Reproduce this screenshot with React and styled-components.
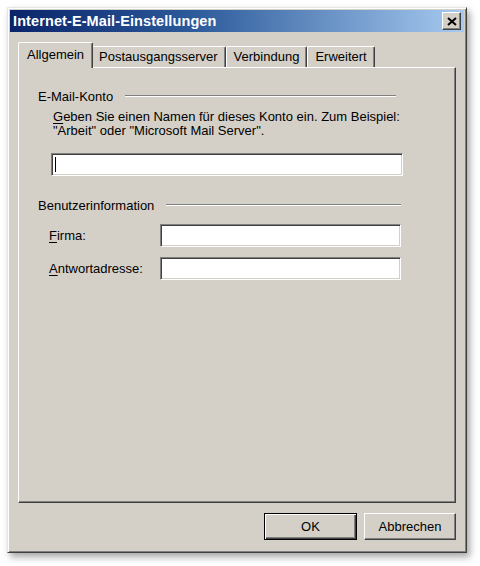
import { useState } from "react";
import styled, { createGlobalStyle } from "styled-components";

const GlobalStyle = createGlobalStyle`
  html, body {
    margin: 0;
    padding: 0;
    background: #ffffff;
  }
  body {
    font-family: Tahoma, "Liberation Sans", Arial, sans-serif;
    font-size: 13px;
    color: #000;
  }
`;

const Page = styled.div`
  padding: 7px;
  width: 480px;
  height: 566px;
  box-sizing: border-box;
`;

const Window = styled.div`
  width: 460px;
  height: 546px;
  box-sizing: border-box;
  background: #d4d0c8;
  border: 1px solid;
  border-color: #e8e6e0 #404040 #404040 #e8e6e0;
  box-shadow: inset 1px 1px 0 #ffffff, inset -1px -1px 0 #808080,
    3px 4px 7px rgba(0, 0, 0, 0.35);
  padding: 2px;
  display: flex;
  flex-direction: column;
`;

const TitleBar = styled.div`
  height: 23px;
  display: flex;
  align-items: center;
  justify-content: space-between;
  padding: 0 3px 0 3px;
  background: linear-gradient(90deg, #0a246a 0%, #2c5a9a 40%, #a6caf0 100%);
`;

const Title = styled.span`
  color: #fff;
  font-weight: bold;
  font-size: 14.5px;
  letter-spacing: 0.1px;
`;

const CloseButton = styled.button`
  width: 19px;
  height: 18px;
  padding: 0;
  background: #d4d0c8;
  border: 1px solid;
  border-color: #ffffff #404040 #404040 #ffffff;
  box-shadow: inset -1px -1px 0 #808080;
  display: flex;
  align-items: center;
  justify-content: center;
`;

const Body = styled.div`
  flex: 1;
  display: flex;
  flex-direction: column;
  padding: 10px 8px 10px 8px;
`;

const TabRow = styled.div`
  display: flex;
  align-items: flex-end;
  height: 26px;
  padding-left: 2px;
  position: relative;
  z-index: 1;
  margin-bottom: -1px;
`;

const Tab = styled.div`
  box-sizing: border-box;
  height: ${(p) => (p.$active ? "26px" : "21px")};
  margin: ${(p) => (p.$active ? "0 -2px 0 -2px" : "0 0 1px 0")};
  padding: ${(p) => (p.$active ? "3px 8px 0 8px" : "1px 7px 0 7px")};
  background: #d4d0c8;
  border: 1px solid #ffffff;
  border-right: 1px solid #404040;
  border-bottom: none;
  border-radius: 2px 2px 0 0;
  box-shadow: inset -1px 0 0 #808080;
  display: flex;
  align-items: flex-start;
  position: relative;
  z-index: ${(p) => (p.$active ? 2 : 1)};
  white-space: nowrap;
  line-height: 18px;
`;

const Panel = styled.div`
  height: 436px;
  box-sizing: border-box;
  border: 1px solid;
  border-color: #ffffff #404040 #404040 #ffffff;
  box-shadow: inset -1px -1px 0 #808080;
  padding: 20px 0 0 19px;
  display: flex;
  flex-direction: column;
`;

const GroupHeader = styled.div`
  display: flex;
  align-items: center;
  gap: 12px;
  height: 16px;
  width: ${(p) => p.$width}px;
`;

const GroupLine = styled.div`
  flex: 1;
  height: 0;
  border-top: 1px solid #808080;
  border-bottom: 1px solid #ffffff;
`;

const Paragraph = styled.p`
  margin: 6px 0 0 15px;
  line-height: 14px;
`;

const Key = styled.span`
  text-decoration: underline;
  text-underline-offset: 2px;
`;

const Field = styled.div`
  position: relative;
  box-sizing: border-box;
  width: ${(p) => p.$width}px;
  height: 23px;
  background: #fff;
  border: 1px solid;
  border-color: #808080 #ffffff #ffffff #808080;
  box-shadow: inset 1px 1px 0 #404040, inset -1px -1px 0 #d4d0c8;
`;

const Input = styled.input`
  width: 100%;
  height: 100%;
  box-sizing: border-box;
  border: none;
  outline: none;
  background: transparent;
  padding: 0 4px;
  font: inherit;
`;

const Caret = styled.span`
  position: absolute;
  left: 3px;
  top: 3px;
  width: 1px;
  height: 15px;
  background: #000;
`;

const Row = styled.div`
  display: flex;
  align-items: center;
  margin-left: ${(p) => p.$indent}px;
  margin-top: ${(p) => p.$top}px;
`;

const Label = styled.label`
  width: 111px;
`;

const Footer = styled.div`
  display: flex;
  justify-content: flex-end;
  gap: 7px;
  margin-top: 10px;
`;

const Button = styled.button`
  width: ${(p) => p.$width}px;
  height: 27px;
  box-sizing: border-box;
  background: #d4d0c8;
  font: inherit;
  color: #000;
  padding: 0;
  border: 1px solid;
  border-color: ${(p) =>
    p.$default ? "#000000" : "#ffffff #404040 #404040 #ffffff"};
  box-shadow: ${(p) =>
    p.$default
      ? "inset 1px 1px 0 #ffffff, inset -1px -1px 0 #404040, inset -2px -2px 0 #808080"
      : "inset -1px -1px 0 #808080"};
`;

function CloseIcon() {
  return (
    <svg width="10" height="9" viewBox="0 0 10 9">
      <path d="M1 1 L9 8 M9 1 L1 8" stroke="#000" strokeWidth="2" />
    </svg>
  );
}

const tabs = ["Allgemein", "Postausgangsserver", "Verbindung", "Erweitert"];

export default function App() {
  const [active, setActive] = useState(0);
  return (
    <Page>
      <GlobalStyle />
      <Window>
        <TitleBar>
          <Title>Internet-E-Mail-Einstellungen</Title>
          <CloseButton aria-label="Schließen">
            <CloseIcon />
          </CloseButton>
        </TitleBar>
        <Body>
          <TabRow>
            {tabs.map((t, i) => (
              <Tab key={t} $active={i === active} onClick={() => setActive(i)}>
                {t}
              </Tab>
            ))}
          </TabRow>
          <Panel>
            <GroupHeader $width={358}>
              <span>E-Mail-Konto</span>
              <GroupLine />
            </GroupHeader>
            <Paragraph>
              <Key>G</Key>eben Sie einen Namen für dieses Konto ein. Zum Beispiel:
              <br />
              "Arbeit" oder "Microsoft Mail Server".
            </Paragraph>
            <Row $indent={13} $top={15}>
              <Field $width={352}>
                <Input />
                <Caret />
              </Field>
            </Row>
            <Row $indent={0} $top={21}>
              <GroupHeader $width={363}>
                <span>Benutzerinformation</span>
                <GroupLine />
              </GroupHeader>
            </Row>
            <Row $indent={11} $top={11}>
              <Label>
                <Key>F</Key>irma:
              </Label>
              <Field $width={241}>
                <Input />
              </Field>
            </Row>
            <Row $indent={11} $top={10}>
              <Label>
                <Key>A</Key>ntwortadresse:
              </Label>
              <Field $width={241}>
                <Input />
              </Field>
            </Row>
          </Panel>
          <Footer>
            <Button $width={93} $default>
              OK
            </Button>
            <Button $width={92}>Abbrechen</Button>
          </Footer>
        </Body>
      </Window>
    </Page>
  );
}
